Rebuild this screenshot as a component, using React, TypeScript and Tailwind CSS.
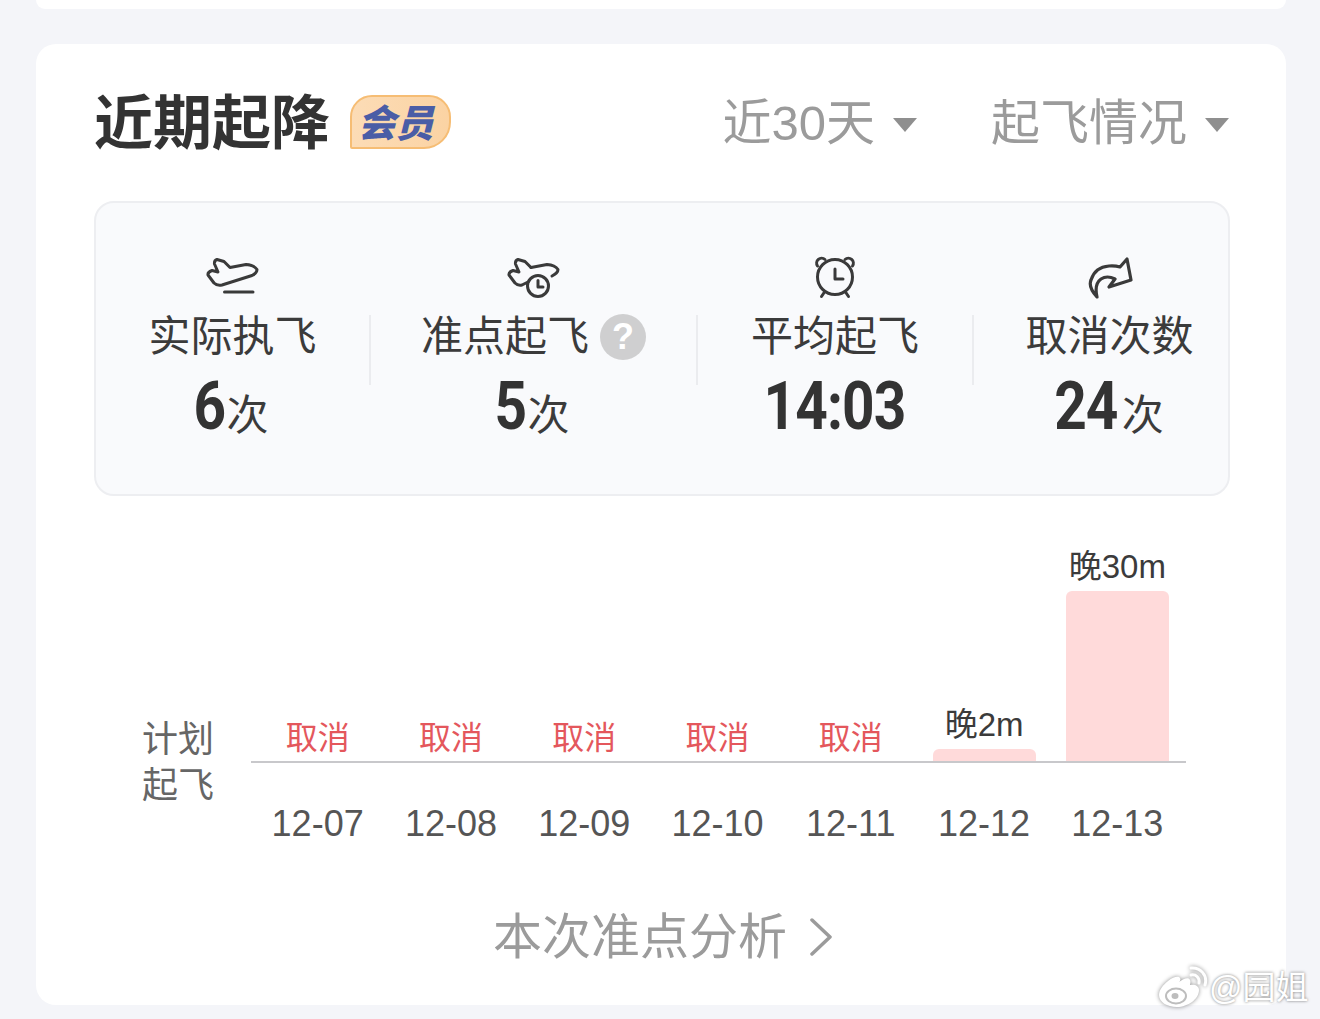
const sans = "font-['Liberation_Sans','Noto_Sans_CJK_SC',sans-serif]";

function TakeoffIcon() {
  return (
    <svg className="mt-[2px]" width="54" height="38" viewBox="0 0 54 38" fill="none" stroke="#3a3a3a" strokeWidth="3" strokeLinejoin="round" strokeLinecap="round">
      <path d="M11 2.5 L18 4.5 L24 10.5 L40 7.5 Q48 8 51 12.5 Q51 16 46 18.5 L16 28 Q11 29 8 26 L2 18 Q1.5 15 6 13.5 L12 15 L8.5 7 Q8 3.5 11 2.5Z" />
      <path d="M18.5 35 H47" />
    </svg>
  );
}

function OnTimeIcon() {
  return (
    <svg className="mt-[2px]" width="54" height="42" viewBox="0 0 54 42" fill="none" stroke="#3a3a3a" strokeWidth="3" strokeLinejoin="round" strokeLinecap="round">
      <path d="M24 10.5 L40 7.5 Q48 8 51 12.5 Q51 16 45 19" />
      <path d="M21 25 L15 28 Q11 29 8 26 L2 18 Q1.5 15 6 13.5 L12 15 L8.5 7 Q8 3.5 11 2.5 L18 4.5 L24 10.5" />
      <circle cx="31" cy="29" r="10.5" />
      <path d="M31 23.5 V30 H36" />
    </svg>
  );
}

function AlarmIcon() {
  return (
    <svg width="44" height="44" viewBox="0 0 44 44" fill="none" stroke="#3a3a3a" strokeWidth="3" strokeLinejoin="round" strokeLinecap="round">
      <circle cx="22" cy="22" r="17.500" />
      <path d="M4.500 11 A5 5 0 0 1 12 4.500" />
      <path d="M39.500 11 A5 5 0 0 0 32 4.500" />
      <path d="M11.500 37 L8.500 41.500 M32.500 37 L35.500 41.500" />
      <path d="M22 14 V24 H30" />
    </svg>
  );
}

function RepeatIcon() {
  return (
    <svg className="mt-[2px]" width="46" height="42" viewBox="0 0 46 42" fill="none" stroke="#3a3a3a" strokeWidth="3.200" strokeLinejoin="round" strokeLinecap="round">
      <path d="M10 40 Q1 30 4 23 Q8 10 22 9 Q28 8.500 33 10 L40 2 L44 23 L22 30 L28 22 Q20 18 14 22 Q7 27 10 40Z" />
    </svg>
  );
}

function Stat({ icon, label, value, unit, help }: { icon: React.ReactNode; label: string; value: string; unit?: string; help?: boolean }) {
  return (
    <div className="flex flex-col items-center">
      <div className="flex h-[46px] items-start">{icon}</div>
      <div className="mt-[11px] flex h-[50px] items-center text-[42px] leading-[50px] text-[#3b3b3b]">
        {label}
        {help && (
          <span className="ml-[11px] flex h-[46px] w-[46px] items-center justify-center rounded-full bg-[#cfcfd0] font-['Liberation_Sans'] text-[36px] font-bold text-white">
            ?
          </span>
        )}
      </div>
      <div className="mt-[9px] flex h-[72px] items-end text-[#333]">
        <span className="origin-bottom font-['Roboto'] text-[66px] leading-[72px] font-bold tracking-[-1px] [transform:scaleX(0.86)]">{value}</span>
        {unit && <span className="mr-[6px] -ml-[1px] text-[42px] leading-[54px] text-[#3b3b3b]">{unit}</span>}
      </div>
    </div>
  );
}

function Divider() {
  return <div className="mt-[60px] h-[70px] w-[2px] shrink-0 bg-[#ebecef]" />;
}

const days = [
  { date: "12-07", text: "取消" },
  { date: "12-08", text: "取消" },
  { date: "12-09", text: "取消" },
  { date: "12-10", text: "取消" },
  { date: "12-11", text: "取消" },
  { date: "12-12", text: "晚2m", bar: 12 },
  { date: "12-13", text: "晚30m", bar: 170 },
];

export default function App() {
  return (
    <div className={`relative h-[1019px] w-[1320px] overflow-hidden bg-[#f4f5f9] ${sans}`}>
      <div className="ml-[36px] h-[9px] w-[1250px] rounded-b-[20px] bg-white" />

      <div className="mt-[35px] ml-[36px] h-[961px] w-[1250px] rounded-[20px] bg-white px-[58px]">
        {/* Header */}
        <div className="flex h-[157px] items-start pt-[46px]">
          <h2 className="text-[59px] leading-[68px] font-bold text-[#333]">近期起降</h2>
          <span className="mt-[5px] ml-[20px] flex h-[54px] w-[101px] items-center justify-center rounded-t-[22px] rounded-br-[27px] rounded-bl-[2px] border-2 border-[#f6bd74] bg-gradient-to-r from-[#fcdcb6] to-[#fbd3a3] pt-[3px] pr-[10px] text-[38px] leading-none font-black text-[#4a5da6] italic">
            会员
          </span>
          <div className="mt-[3px] -mr-[1px] ml-auto flex items-center text-[49px] leading-[60px] text-[#9b9b9b]">
            近30天
            <span className="mt-[4px] ml-[18px] h-0 w-0 border-x-[12px] border-t-[14px] border-x-transparent border-t-[#8f8f8f]" />
            <span className="ml-[74px]">起飞情况</span>
            <span className="mt-[4px] ml-[18px] h-0 w-0 border-x-[12px] border-t-[14px] border-x-transparent border-t-[#8f8f8f]" />
          </div>
        </div>

        {/* Stats */}
        <div className="flex h-[295px] w-[1136px] rounded-[20px] border-2 border-[#edeef1] bg-[#f9fafc] pt-[52px]">
          <div className="w-[273px]">
            <Stat icon={<TakeoffIcon />} label="实际执飞" value="6" unit="次" />
          </div>
          <Divider />
          <div className="w-[325px]">
            <Stat icon={<OnTimeIcon />} label="准点起飞" value="5" unit="次" help />
          </div>
          <Divider />
          <div className="w-[274px]">
            <Stat icon={<AlarmIcon />} label="平均起飞" value="14:03" />
          </div>
          <Divider />
          <div className="flex-1 pl-[17px]">
            <Stat icon={<RepeatIcon />} label="取消次数" value="24" unit="次" />
          </div>
        </div>

        {/* Chart */}
        <div className="mt-[45px] ml-[48px] flex">
          <div className="mt-[176px] w-[109px] text-[36px] leading-[46px] text-[#666]">
            计划
            <br />
            起飞
          </div>
          <div className="w-[935px]">
            <div className="flex h-[222px] border-b-2 border-[#c8c8cb] pr-[2px]">
              {days.map((d) => (
                <div key={d.date} className="flex flex-1 flex-col items-center justify-end">
                  <span className={d.bar ? "mb-[2px] text-[33px] leading-[44px] text-[#3b3b3b]" : "mb-[1px] text-[32px] leading-[44px] text-[#e4575c]"}>{d.text}</span>
                  {d.bar && <div className="w-[103px] rounded-t-[6px] bg-[#ffdada]" style={{ height: d.bar }} />}
                </div>
              ))}
            </div>
            <div className="mt-[40px] flex pr-[2px]">
              {days.map((d) => (
                <span key={d.date} className="flex-1 text-center text-[36px] leading-[42px] text-[#555]">
                  {d.date}
                </span>
              ))}
            </div>
          </div>
        </div>

        {/* Footer link */}
        <div className="mt-[62px] flex items-center justify-center pl-[4px] text-[49px] leading-[60px] text-[#9b9b9b]">
          本次准点分析
          <svg className="ml-[22px]" width="24" height="38" viewBox="0 0 24 38" fill="none" stroke="#9b9b9b" strokeWidth="3.500" strokeLinecap="round" strokeLinejoin="round">
            <path d="M3 2 L21 19 L3 36" />
          </svg>
        </div>
      </div>

      {/* Watermark */}
      <div className="absolute top-[966px] left-[1158px] flex items-center">
        <svg width="50" height="44" viewBox="0 0 50 44" className="drop-shadow-[0_0_2px_rgba(0,0,0,0.45)]">
          <path d="M21 16 C26 12 31 11 32 14 C33 16 32 18 32 19 C37 18 41 20 41 24 C41 33 30 41 19 41 C9 41 1 36 1 29 C1 24 5 19 10 15 C16 10 21 10 22 12 C23 14 22 15 21 16Z" fill="#fff" />
          <ellipse cx="18" cy="30" rx="10" ry="7.500" fill="none" stroke="#bdbdbd" strokeWidth="2" />
          <ellipse cx="17" cy="30" rx="3.500" ry="3" fill="#bdbdbd" />
          <path d="M33 9 C38 8 42 12 41 17" fill="none" stroke="#fff" strokeWidth="3" strokeLinecap="round" />
          <path d="M33 2 C42 1 50 9 47 19" fill="none" stroke="#fff" strokeWidth="3" strokeLinecap="round" />
        </svg>
        <span className="ml-[1px] text-[33px] leading-[44px] text-white [text-shadow:0_0_3px_rgba(0,0,0,0.55)]">@园姐</span>
      </div>
    </div>
  );
}
